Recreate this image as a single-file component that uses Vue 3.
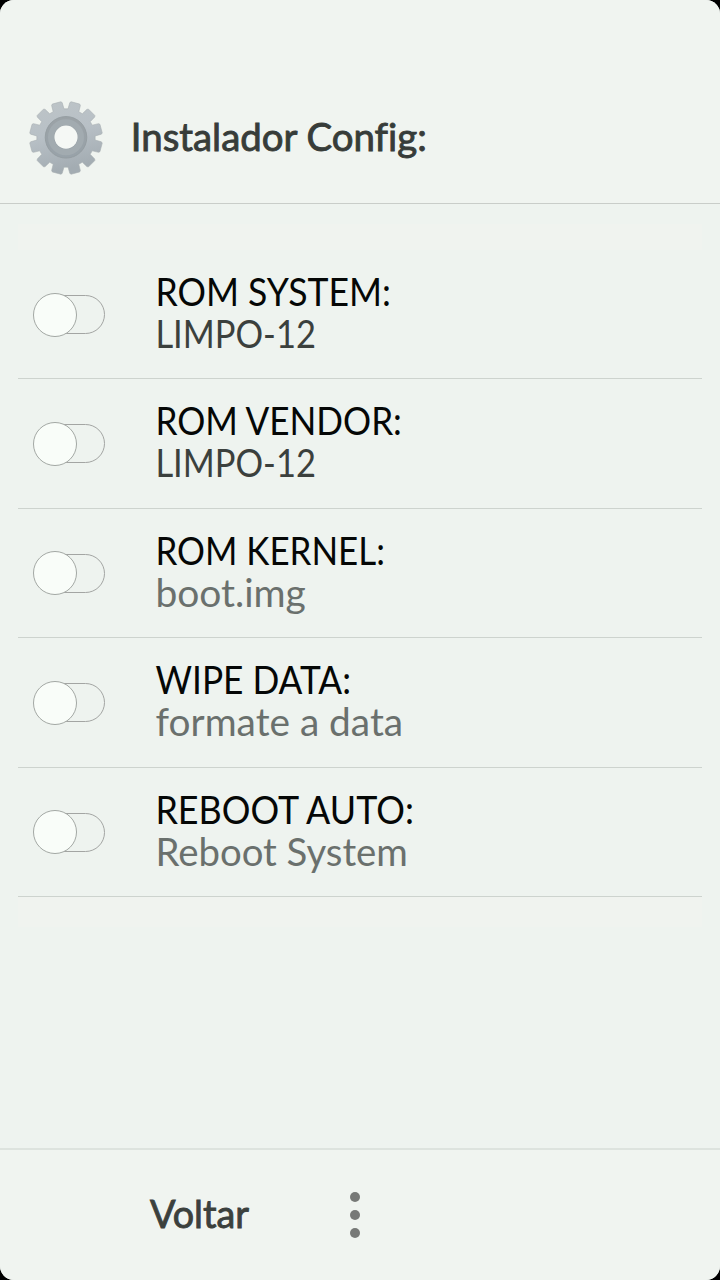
<script setup>
const rows = [
  { title: 'ROM SYSTEM:', tw: 235.5, sub: 'LIMPO-12', sw: 160.5, dark: true },
  { title: 'ROM VENDOR:', tw: 246.5, sub: 'LIMPO-12', sw: 160.5, dark: true },
  { title: 'ROM KERNEL:', tw: 229.5, sub: 'boot.img', sw: 150.5 },
  { title: 'WIPE DATA:', tw: 195.5, tx: 1.5, sub: 'formate a data', sw: 247.5, sx: 1.6 },
  { title: 'REBOOT AUTO:', tw: 258.5, sub: 'Reboot System', sw: 252.5 },
]

// Twelve-tooth gear outline around the origin
const point = (r, deg) => {
  const a = (deg * Math.PI) / 180
  return `${(r * Math.sin(a)).toFixed(2)} ${(-r * Math.cos(a)).toFixed(2)}`
}
const gear =
  'M' +
  Array.from({ length: 12 }, (_, i) => {
    const c = 15 + i * 30
    return [point(29.2, c - 11), point(35.6, c - 8.8), point(36.6, c - 7), point(36.6, c + 7), point(35.6, c + 8.8), point(29.2, c + 11)].join('L')
  }).join('L') +
  'Z'
</script>

<template>
  <div class="device">
    <main class="screen">
      <header class="header">
        <svg class="gear" width="80" height="80" viewBox="-40 -40 80 80">
          <defs>
            <linearGradient id="metal" x1="0" y1="0" x2="0.25" y2="1">
              <stop offset="0" stop-color="#bdc4c7" />
              <stop offset="0.5" stop-color="#b8c0c6" />
              <stop offset="1" stop-color="#a3acb2" />
            </linearGradient>
            <linearGradient id="ring" x1="0" y1="0" x2="0" y2="1">
              <stop offset="0" stop-color="#9ba2a6" />
              <stop offset="1" stop-color="#98a2a9" />
            </linearGradient>
          </defs>
          <path :d="gear" fill="url(#metal)" stroke="#a8afb1" stroke-width="0.6" />
          <circle cy="-0.7" r="20.8" fill="url(#ring)" stroke="#929a9e" stroke-width="0.8" />
          <circle cy="-0.7" r="15" fill="none" stroke="#a2abb0" stroke-width="6" />
          <circle cy="-0.9" r="11.6" fill="#f5f8f5" />
        </svg>
        <svg class="heading" width="320" height="60">
          <text x="1.8" y="41.5" textLength="296" lengthAdjust="spacingAndGlyphs">Instalador Config:</text>
        </svg>
      </header>

      <section class="content">
        <div class="band"></div>
        <div class="list">
          <div v-for="row in rows" :key="row.title" class="row">
            <div class="toggle"><span class="knob"></span></div>
            <svg class="label" width="320" height="100">
              <text class="title" :x="row.tx || 1.4" y="43.1" :textLength="row.tw" lengthAdjust="spacingAndGlyphs">{{ row.title }}</text>
              <text class="sub" :class="{ dark: row.dark }" :x="row.sx || 1.4" y="84.7" :textLength="row.sw" lengthAdjust="spacingAndGlyphs">{{ row.sub }}</text>
            </svg>
          </div>
        </div>
        <div class="band end"></div>
      </section>

      <footer class="footer">
        <svg class="back" width="110" height="60">
          <text x="0" y="40.6" textLength="99" lengthAdjust="spacingAndGlyphs">Voltar</text>
        </svg>
        <div class="menu"><i></i><i></i><i></i></div>
      </footer>
    </main>
  </div>
</template>

<style>
body {
  margin: 0;
  background: #000;
}
</style>

<style scoped>
.device {
  width: 720px;
  height: 1280px;
  background: #000;
}
.screen {
  display: flex;
  flex-direction: column;
  height: 1280px;
  overflow: hidden;
  border-radius: 14px;
  background: #eef3ef;
  font-family: Lato, "Open Sans", sans-serif;
  font-variant-ligatures: none;
}
svg {
  display: block;
  flex: none;
  overflow: visible;
}
.header {
  display: flex;
  box-sizing: border-box;
  flex: none;
  height: 204px;
  padding: 98px 0 0 25.5px;
  border-bottom: 1px solid #c9cdc9;
  background: #f0f4f0;
}
.heading {
  margin: 11px 0 0 23.5px;
}
.heading text,
.back text {
  font-size: 38.5px;
  fill: #373c39;
  stroke: #373c39;
  stroke-width: 0.9px;
}
.content {
  flex: 1;
  padding: 20px 18px 0;
}
.band {
  height: 26px;
  background: #f0f3ef;
}
.band.end {
  height: 30px;
}
.row {
  display: flex;
  box-sizing: border-box;
  height: 129.4px;
  padding: 13px 0 0 15px;
  border-bottom: 1px solid #cdd3ce;
}
.toggle {
  box-sizing: border-box;
  flex: none;
  width: 68px;
  height: 39px;
  margin: 32px 0 0 4px;
  border: 1px solid #a3a5a3;
  border-radius: 20px;
}
.knob {
  display: block;
  box-sizing: border-box;
  width: 44px;
  height: 44px;
  margin: -3.5px 0 0 -5px;
  border: 1px solid #a3a8a4;
  border-radius: 50%;
  background: #f9fdf9;
}
.label {
  margin-left: 48.5px;
}
.label text {
  font-size: 37.7px;
}
.title {
  fill: #050706;
}
.label .sub {
  fill: #6a706d;
}
.label .sub.dark {
  fill: #3b403d;
}
.footer {
  display: flex;
  box-sizing: border-box;
  flex: none;
  height: 132px;
  padding: 37px 0 0 150px;
  border-top: 2px solid #dde3de;
  background: #f0f4f0;
}
.back text {
  fill: #3b403d;
  stroke: #3b403d;
}
.menu {
  display: flex;
  flex-direction: column;
  gap: 8px;
  padding: 5px 0 0 90px;
}
.menu i {
  width: 10px;
  height: 10px;
  border-radius: 50%;
  background: #777977;
}
</style>
